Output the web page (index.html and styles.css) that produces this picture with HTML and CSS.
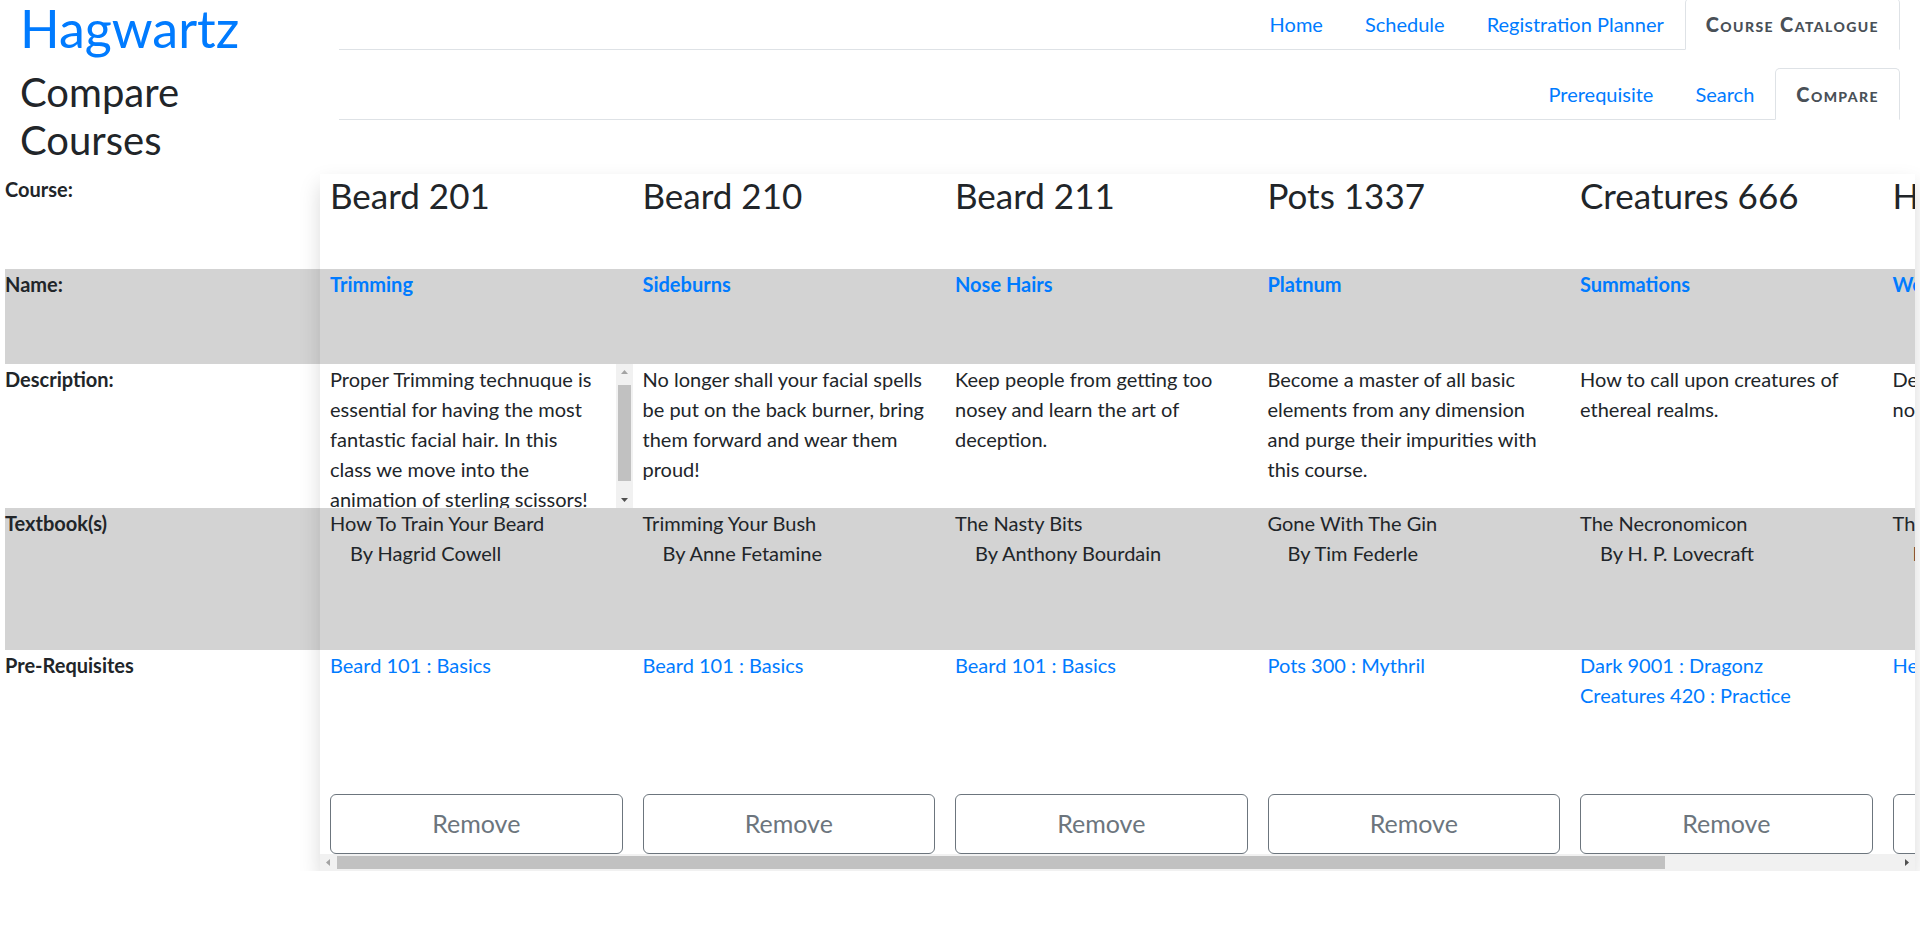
FILE: index.html
```html
<!DOCTYPE html>
<html lang="en">
<head>
<meta charset="utf-8">
<title>Hagwartz - Compare Courses</title>
<link rel="stylesheet" href="styles.css">
</head>
<body>
<header class="top">
  <div class="brand-col"><h1 class="brand"><a href="#">Hagwartz</a></h1></div>
  <nav class="nav-col">
    <ul class="tabs">
      <li><a class="tab" href="#">Home</a></li>
      <li><a class="tab" href="#">Schedule</a></li>
      <li><a class="tab" href="#">Registration Planner</a></li>
      <li><a class="tab active" href="#">Course Catalogue</a></li>
    </ul>
  </nav>
  <div class="brand-col"><h2 class="page-title">Compare Courses</h2></div>
  <nav class="nav-col">
    <ul class="tabs">
      <li><a class="tab" href="#">Prerequisite</a></li>
      <li><a class="tab" href="#">Search</a></li>
      <li><a class="tab active" href="#">Compare</a></li>
    </ul>
  </nav>
</header>

<main class="compare">
  <div class="labels">
    <div class="r-course label">Course:</div>
    <div class="r-name label grey">Name:</div>
    <div class="r-desc label">Description:</div>
    <div class="r-book label grey">Textbook(s)</div>
    <div class="r-pre label">Pre-Requisites</div>
  </div>
  <div class="scroll-box">
    <div class="scroller">
      <div class="course">
        <div class="r-course cell"><h3 class="code">Beard 201</h3></div>
        <div class="r-name cell grey"><a class="name" href="#">Trimming</a></div>
        <div class="r-desc cell desc has-bar">
          <div class="desc-text">Proper Trimming technuque is essential for having the most fantastic facial hair. In this class we move into the animation of sterling scissors!</div>
          <div class="vbar">
            <span class="sb-btn"><svg width="17" height="17" viewBox="0 0 17 17"><path d="M8.5 6L12 10H5Z" fill="#a3a3a3"/></svg></span>
            <div class="vtrack"><div class="vthumb"></div></div>
            <span class="sb-btn"><svg width="17" height="17" viewBox="0 0 17 17"><path d="M8.5 11L12 7H5Z" fill="#505050"/></svg></span>
          </div>
        </div>
        <div class="r-book cell grey"><div>How To Train Your Beard</div><div class="author">By Hagrid Cowell</div></div>
        <div class="r-pre cell"><a href="#">Beard 101 : Basics</a></div>
        <div class="cell"><button class="remove" type="button">Remove</button></div>
      </div>
      <div class="course">
        <div class="r-course cell"><h3 class="code">Beard 210</h3></div>
        <div class="r-name cell grey"><a class="name" href="#">Sideburns</a></div>
        <div class="r-desc cell desc">No longer shall your facial spells be put on the back burner, bring them forward and wear them proud!</div>
        <div class="r-book cell grey"><div>Trimming Your Bush</div><div class="author">By Anne Fetamine</div></div>
        <div class="r-pre cell"><a href="#">Beard 101 : Basics</a></div>
        <div class="cell"><button class="remove" type="button">Remove</button></div>
      </div>
      <div class="course">
        <div class="r-course cell"><h3 class="code">Beard 211</h3></div>
        <div class="r-name cell grey"><a class="name" href="#">Nose Hairs</a></div>
        <div class="r-desc cell desc">Keep people from getting too nosey and learn the art of deception.</div>
        <div class="r-book cell grey"><div>The Nasty Bits</div><div class="author">By Anthony Bourdain</div></div>
        <div class="r-pre cell"><a href="#">Beard 101 : Basics</a></div>
        <div class="cell"><button class="remove" type="button">Remove</button></div>
      </div>
      <div class="course">
        <div class="r-course cell"><h3 class="code">Pots 1337</h3></div>
        <div class="r-name cell grey"><a class="name" href="#">Platnum</a></div>
        <div class="r-desc cell desc">Become a master of all basic elements from any dimension and purge their impurities with this course.</div>
        <div class="r-book cell grey"><div>Gone With The Gin</div><div class="author">By Tim Federle</div></div>
        <div class="r-pre cell"><a href="#">Pots 300 : Mythril</a></div>
        <div class="cell"><button class="remove" type="button">Remove</button></div>
      </div>
      <div class="course">
        <div class="r-course cell"><h3 class="code">Creatures 666</h3></div>
        <div class="r-name cell grey"><a class="name" href="#">Summations</a></div>
        <div class="r-desc cell desc">How to call upon creatures of ethereal realms.</div>
        <div class="r-book cell grey"><div>The Necronomicon</div><div class="author">By H. P. Lovecraft</div></div>
        <div class="r-pre cell"><a href="#">Dark 9001 : Dragonz</a><a href="#">Creatures 420 : Practice</a></div>
        <div class="cell"><button class="remove" type="button">Remove</button></div>
      </div>
      <div class="course">
        <div class="r-course cell"><h3 class="code">Herbs 404</h3></div>
        <div class="r-name cell grey"><a class="name" href="#">Weeds</a></div>
        <div class="r-desc cell desc">Delightful greenery that is simply not meant for the faint of heart.</div>
        <div class="r-book cell grey"><div>That Green Thumb</div><div class="author">By Neville Sprout</div></div>
        <div class="r-pre cell"><a href="#">Herbs 101 : Roots</a></div>
        <div class="cell"><button class="remove" type="button">Remove</button></div>
      </div>
    </div>
    <div class="hbar">
      <span class="sb-btn"><svg width="17" height="17" viewBox="0 0 17 17"><path d="M6 8.5L10 5V12Z" fill="#a3a3a3"/></svg></span>
      <div class="htrack"><div class="hthumb"></div></div>
      <span class="sb-btn"><svg width="17" height="17" viewBox="0 0 17 17"><path d="M11 8.5L7 5V12Z" fill="#505050"/></svg></span>
    </div>
  </div>
</main>
</body>
</html>
```

FILE: styles.css
```css
* { box-sizing: border-box; }

html, body {
  margin: 0;
  padding: 0;
  background: #fff;
}

body {
  font-family: Lato, "Open Sans", sans-serif;
  font-size: 20px;
  line-height: 1.5;
  color: #212529;
}

a { color: #007bff; text-decoration: none; }

/* ---------- header ---------- */
.top {
  display: grid;
  grid-template-columns: 320px 1fr;
  margin-top: -2px;
}

.brand-col { padding: 0 20px; }
.nav-col { padding: 0 20px 0 19px; }

.brand {
  margin: 0 0 10px;
  font-size: 52px;
  line-height: 60px;
  font-weight: 400;
}

.page-title {
  margin: 0 0 10px;
  font-size: 40px;
  line-height: 48px;
  font-weight: 400;
}

.tabs {
  list-style: none;
  margin: 0;
  padding: 0;
  display: flex;
  justify-content: flex-end;
  border-bottom: 1px solid #dee2e6;
}

.tabs li { margin-bottom: -1px; }

.tab {
  display: block;
  padding: 10px 20px;
  border: 1px solid transparent;
  border-top-left-radius: 5px;
  border-top-right-radius: 5px;
  line-height: 30px;
}

.tab.active {
  color: #495057;
  background: #fff;
  border-color: #dee2e6 #dee2e6 #fff;
  font-weight: 900;
  font-variant: small-caps;
  letter-spacing: 1.4px;
}

/* ---------- compare table ---------- */
.compare {
  display: flex;
  margin: 0 5px;
}

.labels {
  width: 315px;
  flex: none;
}

.label {
  font-weight: 700;
  line-height: 30px;
}

.grey { background: #d3d3d3; }

.r-course { height: 95px; }
.r-name { height: 95px; }
.r-desc { height: 144px; }
.r-book { height: 142px; }
.r-pre { height: 144px; }

.scroll-box {
  flex: 1;
  min-width: 0;
  display: flex;
  flex-direction: column;
  background: #fff;
  box-shadow: 0 10px 20px rgba(0, 0, 0, 0.15);
}

.scroller {
  display: flex;
  overflow: hidden;
}

.course {
  flex: none;
  width: 312.5px;
}

.cell {
  padding: 0 10px;
  line-height: 30px;
}

.code {
  margin: 0;
  font-size: 35px;
  line-height: 42px;
  font-weight: 400;
}

.name { font-weight: 700; }

.desc { overflow: hidden; }

.has-bar {
  display: flex;
  padding-right: 0;
}

.desc-text {
  flex: 1;
  min-width: 0;
  padding-right: 16px;
  overflow: hidden;
}

.author { padding-left: 20px; }

.r-pre a { display: block; }

.remove {
  display: block;
  width: 100%;
  padding: 10px 20px;
  font-family: inherit;
  font-size: 25px;
  line-height: 37.5px;
  color: #6c757d;
  background: #fff;
  border: 1px solid #6c757d;
  border-radius: 6px;
}

/* ---------- drawn scrollbars ---------- */
.sb-btn {
  display: block;
  flex: none;
  width: 17px;
  height: 17px;
}

.sb-btn svg { display: block; }

.hbar {
  display: flex;
  height: 17px;
  background: #f1f1f1;
}

.htrack {
  flex: 1;
  padding: 2px 0;
}

.hthumb {
  width: 85.07%;
  height: 100%;
  background: #c1c1c1;
}

.vbar {
  display: flex;
  flex-direction: column;
  flex: none;
  width: 17px;
  height: 144px;
  background: #f1f1f1;
}

.vtrack {
  flex: 1;
  padding: 4px 2px 0;
}

.vthumb {
  height: 96px;
  background: #c1c1c1;
}
```
